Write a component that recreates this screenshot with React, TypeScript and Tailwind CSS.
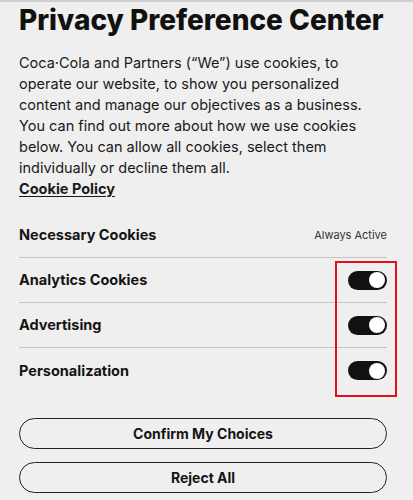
import React from "react";

function Toggle() {
  return (
    <div className="w-[39px] h-[19px] rounded-full bg-[#111] flex items-center justify-end pr-[2px]">
      <div className="w-[16px] h-[16px] rounded-full bg-white" />
    </div>
  );
}

function Row({ label, right, divider }: { label: string; right: React.ReactNode; divider: boolean }) {
  return (
    <div className={"flex items-center justify-between h-[45px] " + (divider ? "border-b border-[#c4c4c4]" : "")}>
      <span className="text-[14.5px] font-bold text-[#141414]">{label}</span>
      {right}
    </div>
  );
}

export default function App() {
  return (
    <div className="relative w-[413px] h-[500px] bg-[#efefef] border-t-2 border-[#cfcfcf] overflow-hidden" style={{ fontFamily: "Inter, 'Open Sans', sans-serif" }}>
      <div className="pl-[19px] pr-[26px]">
        <h1 className="whitespace-nowrap text-[28px] leading-[36px] font-extrabold text-[#111]">Privacy Preference Center</h1>
        <p className="mt-[14px] text-[14.5px] leading-[21px] text-[#1a1a1a]">
          Coca·Cola and Partners (“We”) use cookies, to<br />
          operate our website, to show you personalized<br />
          content and manage our objectives as a business.<br />
          You can find out more about how we use cookies<br />
          below. You can allow all cookies, select them<br />
          individually or decline them all.<br />
          <span className="font-bold underline underline-offset-2">Cookie Policy</span>
        </p>
        <div className="mt-[14px]">
          <Row label="Necessary Cookies" right={<span className="text-[11px] text-[#333]">Always Active</span>} divider />
          <Row label="Analytics Cookies" right={<Toggle />} divider />
          <Row label="Advertising" right={<Toggle />} divider />
          <Row label="Personalization" right={<Toggle />} divider={false} />
        </div>
        <div className="mt-[25px] flex flex-col gap-[13px]">
          <button className="h-[31px] w-full rounded-full border-[1.5px] border-[#222] text-[14px] font-bold text-[#141414]">Confirm My Choices</button>
          <button className="h-[31px] w-full rounded-full border-[1.5px] border-[#222] text-[14px] font-bold text-[#141414]">Reject All</button>
        </div>
      </div>
      <div className="absolute left-[335px] top-[259px] w-[62px] h-[136px] border-2 border-[#e3101b]" />
    </div>
  );
}
